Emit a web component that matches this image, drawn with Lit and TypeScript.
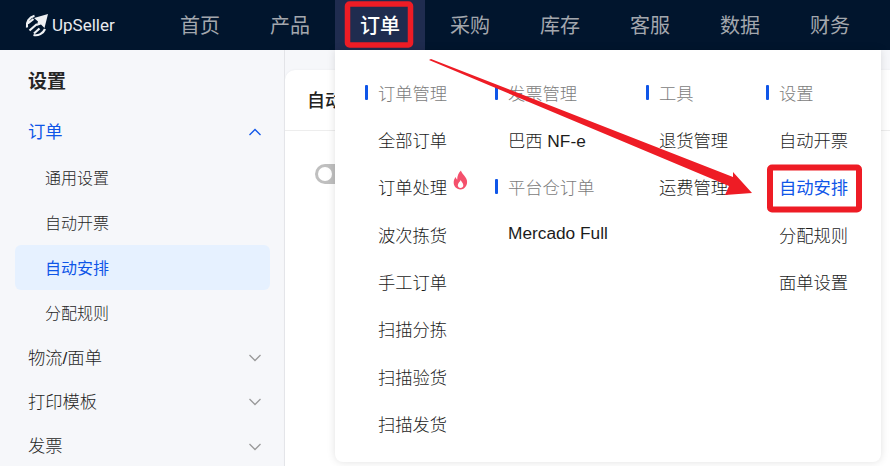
import { LitElement, html, css, svg } from "lit";
import { customElement } from "lit/decorators.js";

const NAV = ["首页", "产品", "订单", "采购", "库存", "客服", "数据", "财务"];

const chev = (up: boolean) => html`<svg class="chev" width="14" height="8" viewBox="0 0 14 8"><path d="${up ? "M1.5 7 7 1.5 12.5 7" : "M1.5 1 7 6.5 12.5 1"}" fill="none" stroke="currentColor" stroke-width="1.3"/></svg>`;

const fire = svg`<svg class="fire" width="15" height="20" viewBox="0 0 15 19" preserveAspectRatio="none"><path fill="#f4506c" d="M8 .5c.6 3 4.900 5.400 5.900 9.300C14.900 14.300 11.800 18.500 7.500 18.500 3.300 18.500.3 15.200.7 11.200c.2-2 1.100-3.400 2-4.500.2 1.200.7 2 1.500 2.500C4.100 5.700 5.600 2.500 8 .5Zm-.3 9c-.4 1.500-2.900 2.700-2.900 5 0 1.500 1.200 2.500 2.700 2.500s2.800-1 2.800-2.600c0-2-2-3.100-2.600-4.900Z"/></svg>`;

@customElement("app-root")
export class AppRoot extends LitElement {
  static styles = css`
    :host { display: block; position: relative; width: 890px; height: 466px; overflow: hidden; background: #f6f7fa; font-family: "Liberation Sans", "Noto Sans CJK SC", sans-serif; color: #262626; }
    .top { height: 50px; background: #01152d; display: flex; align-items: center; padding-left: 155px; position: relative; }
    .logo { position: absolute; left: 25px; top: 13px; display: flex; align-items: center; gap: 3px; color: #e9ebef; font: 400 17px/24px "Roboto", sans-serif; }
    .nav { width: 90px; height: 50px; box-sizing: border-box; padding-bottom: 2px; display: flex; align-items: center; justify-content: center; color: #a3a7ad; font-size: 20px; }
    .nav.on { background: #1f2c4f; color: #fff; font-weight: 500; }
    .body { display: flex; height: 416px; }
    .side { width: 285px; box-sizing: border-box; padding: 18px 14px 0 15px; border-right: 1px solid #e3e4e8; flex: none; }
    .h { font-size: 19px; font-weight: 700; line-height: 28px; padding-left: 13px; margin-bottom: 12px; box-sizing: border-box; }
    .row { height: 45px; box-sizing: border-box; display: flex; align-items: center; font-size: 17.300px; font-weight: 300; padding: 0 8px 2px 13px; justify-content: space-between; color: #1f1f1f; }
    .row.blue { color: #0f56e8; font-weight: 400; padding-bottom: 0; margin-bottom: 2px; }
    .row.tight { height: 44px; }
    .chev { color: #9a9a9a; margin-top: 4px; }
    .blue .chev { color: #0f56e8; margin-top: 3px; }
    .sub { height: 45px; box-sizing: border-box; display: flex; align-items: center; font-size: 16px; font-weight: 300; padding: 0 0 1px 30px; color: #262626; border-radius: 6px; }
    .sub.on { background: #e6f1ff; color: #0f56e8; font-weight: 400; }
    .main { flex: 1; padding-top: 20px; }
    .card { height: 396px; background: #fff; border-top-left-radius: 10px; box-shadow: 0 0 2px #e6e7ea; }
    .cardh { height: 61px; box-sizing: border-box; border-bottom: 1px solid #ededed; padding: 0 0 3px 22px; font-size: 18px; font-weight: 500; display: flex; align-items: center; color: #222; }
    .toggle { width: 44px; height: 20px; background: #bfbfbf; border-radius: 10px; margin: 33px 0 0 30px; padding: 3px; box-sizing: border-box; }
    .knob { width: 14px; height: 14px; background: #fff; border-radius: 50%; }
    .drop { position: absolute; left: 335px; top: 50px; width: 546px; height: 412px; background: #fff; border-radius: 0 0 8px 8px; box-shadow: 0 0 8px rgba(0,0,0,.12); display: grid; grid-template-columns: 130px 151px 120px 1fr; padding: 20px 0 0 30px; box-sizing: border-box; }
    .title { height: 47px; box-sizing: border-box; padding-bottom: 2px; display: flex; align-items: center; gap: 10px; font-size: 17.300px; font-weight: 300; color: #7c7c7c; }
    .title i { width: 3px; height: 15px; background: #0f56e8; border-radius: 1px; flex: none; }
    .it { height: 47.300px; box-sizing: border-box; padding: 0 0 2px 13px; display: flex; align-items: center; font-size: 17.300px; font-weight: 300; color: #1c1c1c; position: relative; }
    .it.blue { color: #0f56e8; font-weight: 400; }
    .fire { position: absolute; left: 88px; top: 6px; }
    .over { position: absolute; left: 0; top: 0; pointer-events: none; }
  `;

  private col(title: string, items: string[]) {
    return html`<div class="title"><i></i>${title}</div>${items.map((t) => html`<div class="it">${t}</div>`)}`;
  }

  render() {
    return html`
      <div class="top">
        <div class="logo">
          <svg width="24" height="24" viewBox="0 0 24 24" fill="none" stroke="#eef0f3" stroke-width="2.200">
            <path fill="#eef0f3" stroke="none" d="M23 1 19.500 15l-3.500-3.500-4.500 1.500 1.500-4.500L9 5Z"/>
            <path d="M9.500 2.800A10 10 0 0 0 2 14.500M20 16A10 10 0 0 1 8.500 22M2.800 10.500 8.500 6M4.500 17.500 12 11M9 20.500 14.500 15.500"/>
          </svg>
          <span>UpSeller</span>
        </div>
        ${NAV.map((n) => html`<div class="nav ${n === "订单" ? "on" : ""}">${n}</div>`)}
      </div>
      <div class="body">
        <div class="side">
          <div class="h">设置</div>
          <div class="row blue">订单 ${chev(true)}</div>
          <div class="sub">通用设置</div>
          <div class="sub">自动开票</div>
          <div class="sub on">自动安排</div>
          <div class="sub">分配规则</div>
          <div class="row tight">物流/面单 ${chev(false)}</div>
          <div class="row tight">打印模板 ${chev(false)}</div>
          <div class="row">发票 ${chev(false)}</div>
        </div>
        <div class="main">
          <div class="card">
            <div class="cardh">自动安排</div>
            <div class="toggle"><div class="knob"></div></div>
          </div>
        </div>
      </div>
      <div class="drop">
        <div>
          <div class="title"><i></i>订单管理</div>
          <div class="it">全部订单</div>
          <div class="it">订单处理${fire}</div>
          <div class="it">波次拣货</div>
          <div class="it">手工订单</div>
          <div class="it">扫描分拣</div>
          <div class="it">扫描验货</div>
          <div class="it">扫描发货</div>
        </div>
        <div>
          ${this.col("发票管理", ["巴西 NF-e"])}
          ${this.col("平台仓订单", ["Mercado Full"])}
        </div>
        <div>${this.col("工具", ["退货管理", "运费管理"])}</div>
        <div>
          <div class="title"><i></i>设置</div>
          <div class="it">自动开票</div>
          <div class="it blue">自动安排</div>
          <div class="it">分配规则</div>
          <div class="it">面单设置</div>
        </div>
      </div>
      <svg class="over" width="890" height="466" viewBox="0 0 890 466" fill="none">
        <rect x="347.500" y="4" width="63" height="41" rx="2" stroke="#ee1c25" stroke-width="5.500"/>
        <rect x="770" y="167.500" width="89" height="42" rx="2" stroke="#ee1c25" stroke-width="6"/>
        <path fill="#ee1c25" d="M429 60 431 59 733 177 733 172 752 193 725 195 729 186Z"/>
      </svg>
    `;
  }
}
